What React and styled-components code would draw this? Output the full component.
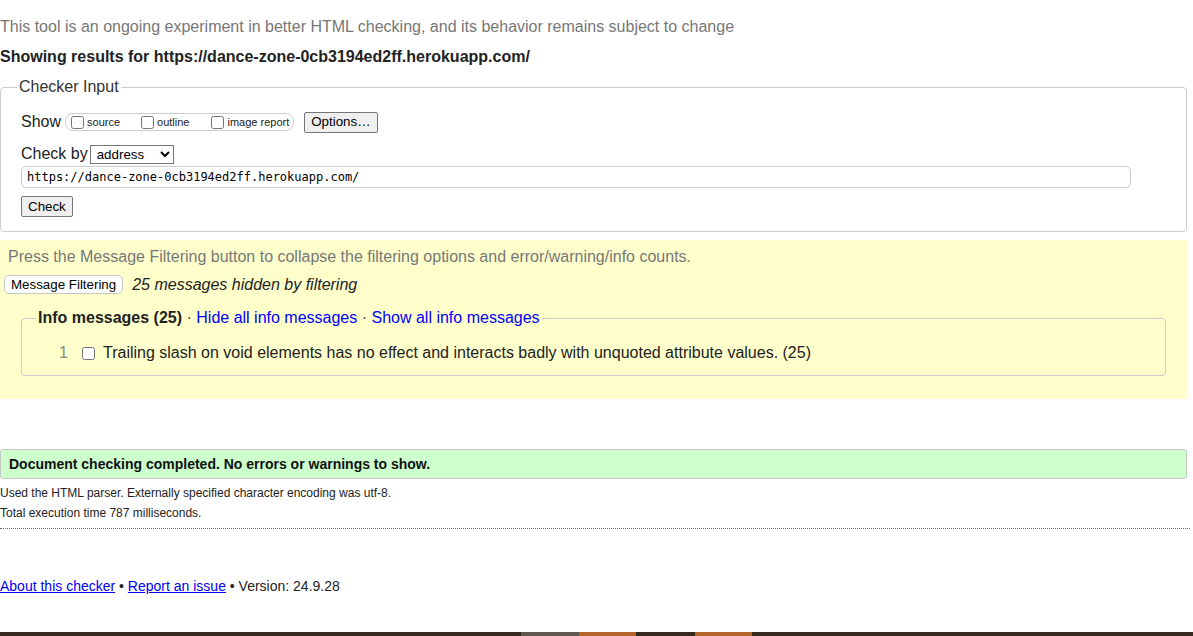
import React from "react";
import styled, { createGlobalStyle } from "styled-components";

const GlobalStyle = createGlobalStyle`
  html, body {
    margin: 0;
    padding: 0;
    background: #fff;
  }
  body {
    font-family: "Liberation Sans", Arial, sans-serif;
    font-size: 16px;
    color: #222;
    overflow: hidden;
  }
`;

const Page = styled.div`
  width: 1187px;
  height: 636px;
  position: relative;
`;

const Intro = styled.p`
  margin: 0;
  padding-top: 18px;
  line-height: 18px;
  color: #777;
`;

const Showing = styled.h2`
  margin: 12px 0 0;
  font-size: 16px;
  line-height: 18px;
  font-weight: bold;
  color: #222;
`;

const Fieldset = styled.fieldset`
  margin: ${(p) => p.$margin || "0"};
  padding: ${(p) => p.$padding || "0"};
  border: 1px solid #ccc;
  border-radius: 4px;
  min-width: 0;
`;

const Legend = styled.legend`
  margin-left: ${(p) => p.$offset || 16}px;
  padding: 0 2px;
  font-size: 16px;
  line-height: 18px;
  color: ${(p) => (p.$dark ? "#222" : "#333")};
  font-weight: ${(p) => (p.$bold ? "bold" : "normal")};
`;

const Row = styled.div`
  display: flex;
  align-items: center;
  margin-top: ${(p) => p.$top || 0}px;
  height: ${(p) => p.$h || 20}px;
`;

const Label = styled.span`
  font-size: 16px;
  line-height: 18px;
  color: #222;
  margin-right: ${(p) => p.$gap || 4}px;
`;

const Pill = styled.span`
  display: inline-flex;
  align-items: center;
  height: 16px;
  padding: 0 4px 0 1px;
  border: 1px solid #ccc;
  border-radius: 8px;
`;

const Opt = styled.label`
  display: inline-flex;
  align-items: center;
  font-size: 11px;
  margin-right: ${(p) => p.$gap || 0}px;
  color: #222;

  input {
    margin: 0 3px 0 4px;
    width: 13px;
    height: 13px;
  }
`;

const Button = styled.button`
  font-family: "Liberation Sans", Arial, sans-serif;
  font-size: 13.333px;
  height: ${(p) => p.$h || 21}px;
  padding: 0 6px;
  margin-left: ${(p) => p.$ml || 0}px;
  background: #efefef;
  color: #000;
  border: 1px solid #767676;
  border-radius: 2px;
  line-height: 1;
`;

const FilterButton = styled(Button)`
  background: #fff;
  border: 1px solid #c8c8c8;
  border-radius: 5px;
  padding: 0 6px;
`;

const Select = styled.select`
  font-family: "Liberation Sans", Arial, sans-serif;
  font-size: 13.333px;
  width: 84px;
  height: 19px;
  border: 1px solid #767676;
  border-radius: 0;
  background: #fff;
  color: #000;
  padding: 0 2px;
`;

const UrlInput = styled.input`
  display: block;
  margin: 2px 0 0 20px;
  width: 1110px;
  height: 22px;
  box-sizing: border-box;
  border: 1px solid #ccc;
  border-radius: 5px;
  padding: 0 5px;
  font-family: "DejaVu Sans Mono", "Liberation Mono", monospace;
  font-size: 12px;
  color: #000;
  outline: none;
`;

const Inner = styled.div`
  padding-left: 20px;
`;

const Filtering = styled.div`
  margin-top: 8px;
  background: #ffffcc;
  padding: 8px 0 23px;
`;

const Hint = styled.p`
  margin: 0 0 0 8px;
  line-height: 18px;
  color: #777;
`;

const Hidden = styled.em`
  margin-left: 9px;
  font-size: 16px;
  color: #222;
`;

const InfoLink = styled.a`
  color: #0000ff;
  text-decoration: none;
  font-weight: normal;
`;

const Dot = styled.span`
  font-weight: normal;
  color: #444;
`;

const MsgRow = styled.div`
  display: flex;
  align-items: center;
  height: 18px;
  margin-top: 17px;
  padding-left: 37px;
`;

const Num = styled.span`
  width: 9px;
  color: #888;
  font-size: 16px;
`;

const MsgCheck = styled.input`
  margin: 0 8px 0 14px;
  width: 13px;
  height: 13px;
`;

const MsgText = styled.span`
  font-size: 16px;
  line-height: 18px;
  color: #222;
`;

const Success = styled.div`
  margin-top: 50px;
  height: 30px;
  box-sizing: border-box;
  background: #ccffcc;
  border: 1px solid #c6c6c6;
  border-radius: 3px;
  display: flex;
  align-items: center;
  padding-left: 8px;
  font-size: 14px;
  font-weight: bold;
  color: #111;
`;

const Detail = styled.p`
  margin: ${(p) => p.$top || 6}px 0 0;
  font-size: 12px;
  line-height: 14px;
  color: #222;
`;

const Rule = styled.hr`
  margin: 8px 0 0;
  width: 1190px;
  border: 0;
  border-top: 1px dotted #666;
  height: 0;
`;

const Footer = styled.p`
  margin: 49px 0 0;
  font-size: 14px;
  line-height: 16px;
  color: #222;

  a {
    color: #0000ee;
    text-decoration: underline;
  }
`;

const Strip = styled.div`
  position: absolute;
  left: 0;
  bottom: 0;
  width: 1193px;
  height: 4px;
  display: flex;
  background: #382b1f;
`;

const Seg = styled.div`
  width: ${(p) => p.$w}px;
  background: ${(p) => p.$c};
`;

export default function App() {
  return (
    <Page>
      <GlobalStyle />
      <Intro>
        This tool is an ongoing experiment in better HTML checking, and its
        behavior remains subject to change
      </Intro>
      <Showing>Showing results for https://dance-zone-0cb3194ed2ff.herokuapp.com/</Showing>

      <Fieldset $margin="12px 0 0" $padding="0 0 14px">
        <Legend>Checker Input</Legend>
        <Inner>
          <Row $top={16}>
            <Label>Show</Label>
            <Pill>
              <Opt $gap={17}>
                <input type="checkbox" />
                source
              </Opt>
              <Opt $gap={18}>
                <input type="checkbox" />
                outline
              </Opt>
              <Opt>
                <input type="checkbox" />
                image report
              </Opt>
            </Pill>
            <Button $ml={10}>Options…</Button>
          </Row>
          <Row $top={12}>
            <Label $gap={2}>Check by</Label>
            <Select defaultValue="address">
              <option value="address">address</option>
              <option value="file">file upload</option>
              <option value="text">text input</option>
            </Select>
          </Row>
        </Inner>
        <UrlInput defaultValue="https://dance-zone-0cb3194ed2ff.herokuapp.com/" />
        <Inner>
          <Row $top={8} $h={21}>
            <Button>Check</Button>
          </Row>
        </Inner>
      </Fieldset>

      <Filtering>
        <Hint>
          Press the Message Filtering button to collapse the filtering options
          and error/warning/info counts.
        </Hint>
        <Row $top={9} $h={19}>
          <FilterButton $ml={4} $h={19}>Message Filtering</FilterButton>
          <Hidden>25 messages hidden by filtering</Hidden>
        </Row>
        <Fieldset $margin="15px 21px 0" $padding="0 0 13px">
          <Legend $offset={14} $bold $dark>
            Info messages (25) <Dot>·</Dot>{" "}
            <InfoLink href="#">Hide all info messages</InfoLink> <Dot>·</Dot>{" "}
            <InfoLink href="#">Show all info messages</InfoLink>
          </Legend>
          <MsgRow>
            <Num>1</Num>
            <MsgCheck type="checkbox" />
            <MsgText>
              Trailing slash on void elements has no effect and interacts badly
              with unquoted attribute values. (25)
            </MsgText>
          </MsgRow>
        </Fieldset>
      </Filtering>

      <Success>Document checking completed. No errors or warnings to show.</Success>
      <Detail $top={7}>
        Used the HTML parser. Externally specified character encoding was utf-8.
      </Detail>
      <Detail>Total execution time 787 milliseconds.</Detail>
      <Rule />
      <Footer>
        <a href="#">About this checker</a> • <a href="#">Report an issue</a> •
        Version: 24.9.28
      </Footer>

      <Strip>
        <Seg $w={521} $c="#382b1f" />
        <Seg $w={58} $c="#5f5850" />
        <Seg $w={57} $c="#b4652a" />
        <Seg $w={59} $c="#362a1f" />
        <Seg $w={57} $c="#b4652a" />
      </Strip>
    </Page>
  );
}
